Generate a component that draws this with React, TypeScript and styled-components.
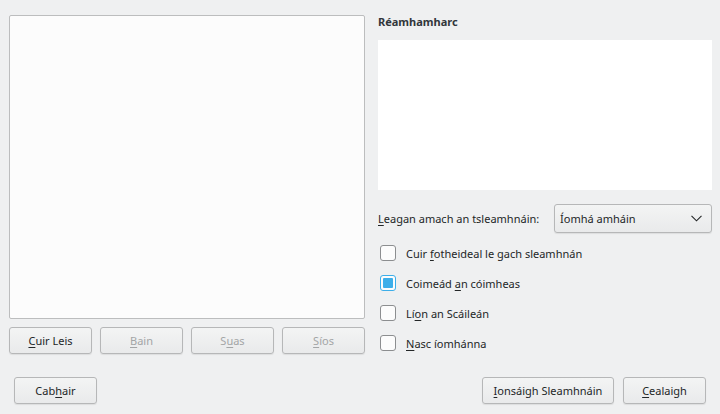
import React from "react";
import styled, { createGlobalStyle } from "styled-components";

const Global = createGlobalStyle`
  html, body { margin: 0; padding: 0; }
  body { background: #eff0f1; font-family: "Noto Sans", "DejaVu Sans", sans-serif; font-size: 11px; color: #232627; }
`;

const Window = styled.div`
  width: 720px;
  height: 414px;
  box-sizing: border-box;
  background: #eff0f1;
  display: flex;
  flex-direction: column;
`;

const Main = styled.div`
  display: flex;
  padding: 15px 8px 0 9px;
  gap: 13px;
`;

const LeftCol = styled.div`
  width: 356px;
  display: flex;
  flex-direction: column;
  gap: 8px;
`;

const ListBox = styled.div`
  height: 304px;
  box-sizing: border-box;
  background: #fcfcfc;
  border: 1px solid #bcbdbe;
  border-radius: 2px;
`;

const ButtonRow = styled.div`
  display: flex;
  gap: 8px;
`;

const Button = styled.button<{ $w?: number }>`
  width: ${(p) => p.$w ?? 83}px;
  height: 27px;
  box-sizing: border-box;
  border: 1px solid #b6b7b8;
  border-radius: 3px;
  background: linear-gradient(#f3f4f4, #e9eaeb);
  box-shadow: 0 1px 1px rgba(0, 0, 0, 0.08);
  font-family: "Noto Sans", "DejaVu Sans", sans-serif;
  font-size: 11px;
  color: ${(p) => (p.disabled ? "#a3a5a6" : "#232627")};
  padding: 0;
  display: flex;
  align-items: center;
  justify-content: center;
`;

const U = styled.span`
  text-decoration: underline;
  text-underline-offset: 2px;
`;

const RightCol = styled.div`
  width: 334px;
  display: flex;
  flex-direction: column;
`;

const Title = styled.div`
  font-weight: bold;
  font-size: 11px;
  height: 25px;
  line-height: 14px;
  color: #31363b;
`;

const Preview = styled.div`
  height: 150px;
  background: #ffffff;
`;

const ComboRow = styled.div`
  display: flex;
  align-items: center;
  justify-content: space-between;
  margin-top: 14px;
  height: 29px;
`;

const Combo = styled.div`
  width: 158px;
  height: 29px;
  box-sizing: border-box;
  border: 1px solid #b6b7b8;
  border-radius: 3px;
  background: linear-gradient(#f3f4f4, #e9eaeb);
  box-shadow: 0 1px 1px rgba(0, 0, 0, 0.08);
  display: flex;
  align-items: center;
  justify-content: space-between;
  padding: 0 9px 0 5px;
`;

const CheckList = styled.div`
  display: flex;
  flex-direction: column;
  margin-top: 5px;
  padding-left: 2px;
`;

const CheckRow = styled.label`
  height: 30px;
  display: flex;
  align-items: center;
  gap: 10px;
`;

const Box = styled.span<{ $checked?: boolean }>`
  width: 16px;
  height: 16px;
  box-sizing: border-box;
  border: 1px solid ${(p) => (p.$checked ? "#3daee9" : "#8c8e90")};
  border-radius: 3px;
  background: #fcfcfc;
  padding: 2px;
  display: flex;
`;

const Fill = styled.span`
  flex: 1;
  background: #3daee9;
  border-radius: 1px;
`;

const Footer = styled.div`
  display: flex;
  justify-content: space-between;
  align-items: center;
  padding: 0 14px 0 14px;
  margin-top: 19px;
`;

const FooterRight = styled.div`
  display: flex;
  gap: 9px;
`;

const Check = ({ checked, children }: { checked?: boolean; children: React.ReactNode }) => (
  <CheckRow>
    <Box $checked={checked}>{checked && <Fill />}</Box>
    <span>{children}</span>
  </CheckRow>
);

export default function App() {
  return (
    <>
      <Global />
      <Window>
        <Main>
          <LeftCol>
            <ListBox />
            <ButtonRow>
              <Button><U>C</U>uir Leis</Button>
              <Button disabled><U>B</U>ain</Button>
              <Button disabled>S<U>u</U>as</Button>
              <Button disabled><U>S</U>íos</Button>
            </ButtonRow>
          </LeftCol>
          <RightCol>
            <Title>Réamhamharc</Title>
            <Preview />
            <ComboRow>
              <span><U>L</U>eagan amach an tsleamhnáin:</span>
              <Combo>
                <span>Íomhá amháin</span>
                <svg width="11" height="7" viewBox="0 0 11 7">
                  <path d="M0.5 0.8 L5.5 5.8 L10.5 0.8" fill="none" stroke="#232627" strokeWidth="1.1" />
                </svg>
              </Combo>
            </ComboRow>
            <CheckList>
              <Check>Cuir <U>f</U>otheideal le gach sleamhnán</Check>
              <Check checked>Coimeád <U>a</U>n cóimheas</Check>
              <Check>Lí<U>o</U>n an Scáileán</Check>
              <Check><U>N</U>asc íomhánna</Check>
            </CheckList>
          </RightCol>
        </Main>
        <Footer>
          <Button>Cab<U>h</U>air</Button>
          <FooterRight>
            <Button $w={132}><U>I</U>onsáigh Sleamhnáin</Button>
            <Button><U>C</U>ealaigh</Button>
          </FooterRight>
        </Footer>
      </Window>
    </>
  );
}
